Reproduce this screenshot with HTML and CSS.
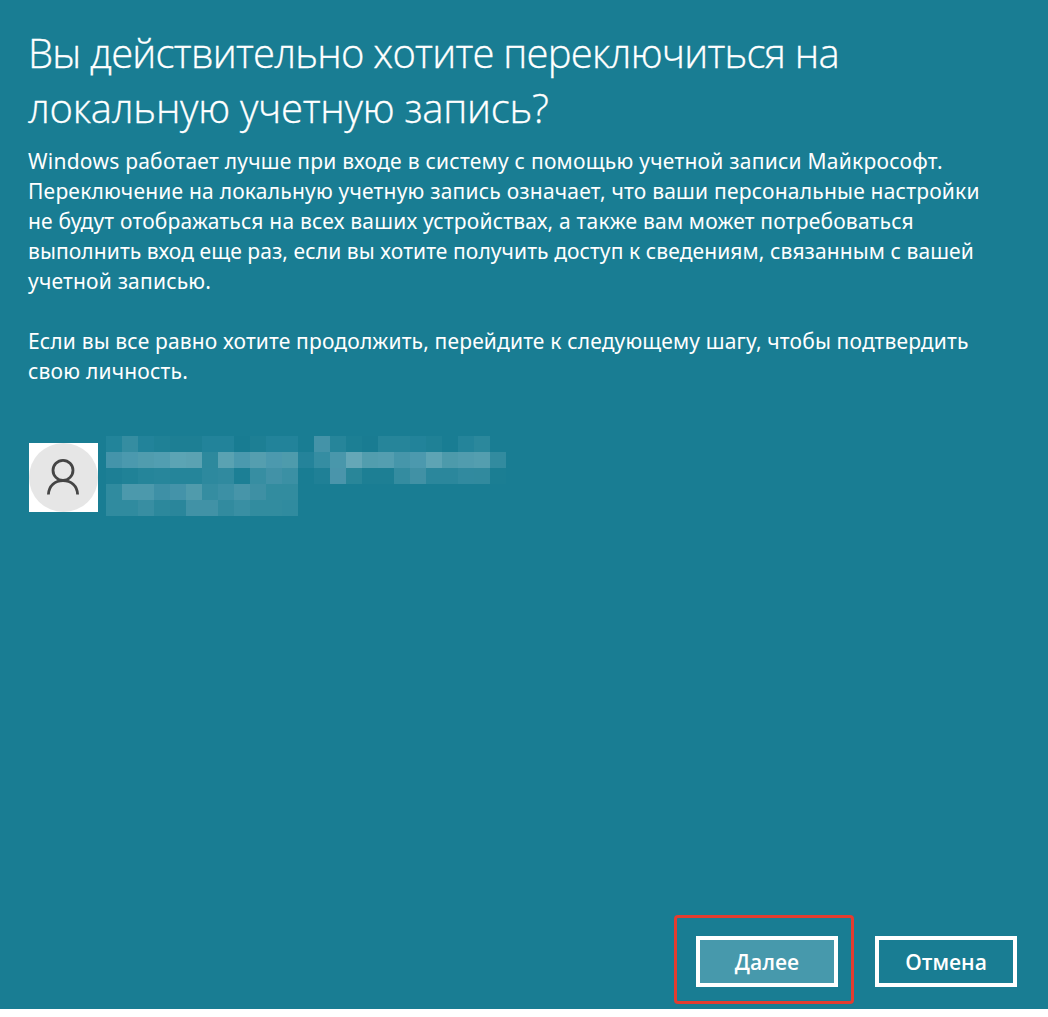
FILE: index.html
```html
<!DOCTYPE html>
<html lang="ru">
<head>
    <meta charset="UTF-8">
    <meta name="viewport" content="width=device-width, initial-scale=1.0">
    <title>Локальная учетная запись</title>
    <link rel="stylesheet" href="styles.css">
</head>
<body>
    <main class="dialog">
        <h1 class="title">
            <span class="t1">Вы действительно хотите переключиться на</span>
            <span class="t2">локальную учетную запись?</span>
        </h1>

        <p class="text">
            <span class="l1">Windows работает лучше при входе в систему с помощью учетной записи Майкрософт.</span>
            <span class="l2">Переключение на локальную учетную запись означает, что ваши персональные настройки</span>
            <span class="l3">не будут отображаться на всех ваших устройствах, а также вам может потребоваться</span>
            <span class="l4">выполнить вход еще раз, если вы хотите получить доступ к сведениям, связанным с вашей</span>
            <span class="l5">учетной записью.</span>
        </p>
        <p class="text">
            <span class="l6">Если вы все равно хотите продолжить, перейдите к следующему шагу, чтобы подтвердить</span>
            <span class="l7">свою личность.</span>
        </p>

        <div class="account">
            <div class="avatar">
                <svg width="69" height="69" viewBox="0 0 69 69">
                    <circle cx="34.5" cy="34.5" r="34.5" fill="#e6e6e6"/>
                    <g fill="none" stroke="#454545" stroke-width="2.8">
                        <circle cx="34" cy="27.3" r="10"/>
                        <path d="M19.4 51.5C19.9 42.6 26 37.6 34 37.6S48.3 42.6 48.6 51.5"/>
                    </g>
                </svg>
            </div>
            <div class="mosaic" id="mosaic"></div>
        </div>

        <div class="buttons">
            <div class="highlight">
                <button class="btn btn-primary">Далее</button>
            </div>
            <button class="btn btn-cancel">Отмена</button>
        </div>
    </main>

    <script>
        // Цвета скрытых данных аккаунта, по строкам
        const rows = [
            '22849a 358da1 22839a 1f8196 1d7f94 1d7f94 22839a 22839a 187c92 1d7f94 22839a 22839a 197d93 4493a8 26859a 1c7f94 197c92 26859a 26859a 22839a 1f8196 197d93 24849a 2b889c 197d93',
            '4494aa 4b99ae 509cae 529eb1 5ca4b4 5ba2b2 2d899d 5aa2b2 4b99ae 559eaf 4c99ae 4e9bac 24839a 358da2 4997ab 65a7b7 529dae 549eb0 4696aa 4c99ae 5ea4b4 4d9aab 519cae 549eaf 328b9f',
            '1d7f95 208297 25859a 27869b 25859a 25859a 2d899e 308a9f 1c7f95 378ea2 4292a7 3b90a4 197d93 1f8096 4a95ab 298699 1d7f94 1d7f94 348ca0 4191a5 2b879c 2b879c 318a9f 318a9e 1b7e93',
            '308b9f 4c99ac 4c99ac 3e90a6 4493a9 509bac 358da1 3c90a5 4795a9 3e90a4 328c9f 328c9f',
            '308b9f 308b9f 388ea2 2c889c 2a869b 4192a6 4192a6 328b9f 398fa3 328c9f 328c9f 308b9f'
        ];
        const mosaic = document.getElementById('mosaic');

        rows.forEach(row => {
            const line = document.createElement('div');
            line.className = 'mosaic-row';
            row.split(' ').forEach(color => {
                const cell = document.createElement('i');
                cell.style.backgroundColor = '#' + color;
                line.appendChild(cell);
            });
            mosaic.appendChild(line);
        });
    </script>
</body>
</html>
```
FILE: styles.css
```css
* {
    box-sizing: border-box;
}

body {
    margin: 0;
    background-color: #fff;
    font-family: "Open Sans", "Noto Sans", sans-serif;
    color: #fff;
}

.dialog {
    display: flex;
    flex-direction: column;
    height: 1009px;
    padding: 25px 31px 5px 28px;
    background-color: #197d93;
}

.title {
    margin: 0 0 11px;
    font-size: 40px;
    font-weight: 300;
    line-height: 55px;
    -webkit-text-stroke: 0.3px #fff;
}

.title span,
.text span {
    display: block;
    width: max-content;
    white-space: nowrap;
}

.text {
    margin: 0 0 30px;
    font-family: "Noto Sans", sans-serif;
    font-size: 21px;
    line-height: 30px;
}

/* Межбуквенный интервал по строкам */
.t1 { letter-spacing: -0.77px; }
.t2 { letter-spacing: -0.25px; }
.l1 { letter-spacing: 0.25px; }
.l2 { letter-spacing: 0.21px; }
.l3 { letter-spacing: 0.2px; }
.l4 { letter-spacing: 0.095px; }
.l5 { letter-spacing: 0.2px; }
.l6 { letter-spacing: 0.157px; }
.l7 { letter-spacing: 0.2px; }

.account {
    display: flex;
    align-items: flex-start;
    gap: 8px;
    margin: 20px 0 0 1px;
}

.avatar {
    width: 69px;
    height: 69px;
    margin-top: 7px;
    background-color: #fff;
}

.avatar svg {
    display: block;
}

.mosaic-row {
    display: flex;
    height: 16px;
}

.mosaic-row i {
    width: 16px;
    height: 16px;
}

.buttons {
    display: flex;
    justify-content: flex-end;
    align-items: center;
    gap: 21px;
    margin-top: auto;
}

.highlight {
    padding: 18px 13px 14px 19px;
    border: 3px solid #e53c2f;
    border-radius: 4px;
}

.btn {
    display: block;
    width: 142px;
    height: 51px;
    padding: 0;
    border: 4px solid #fff;
    background-color: transparent;
    font-family: "Open Sans", sans-serif;
    font-size: 21px;
    font-weight: 600;
    color: #fff;
}

.btn-primary {
    background-color: #4799ac;
}

.btn-cancel {
    margin-top: 4px;
}
```
